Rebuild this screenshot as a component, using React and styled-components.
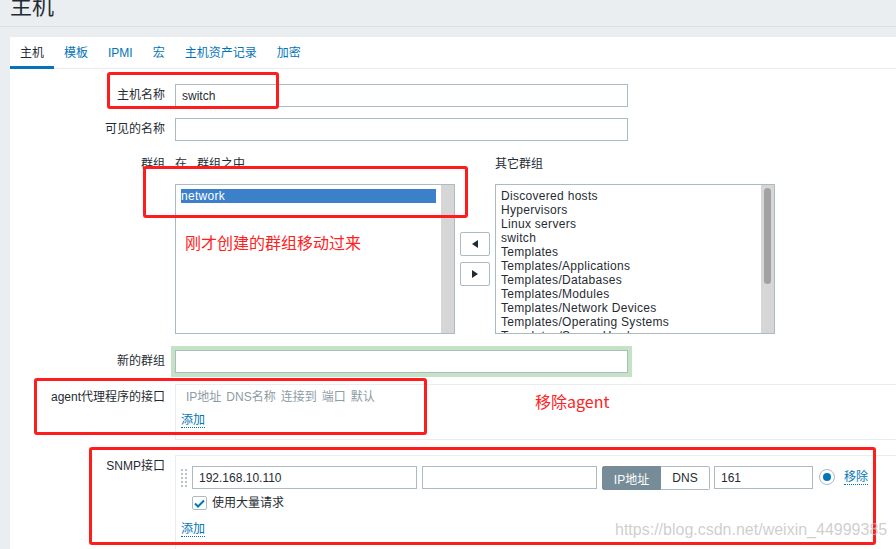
import React from 'react';
import styled, { createGlobalStyle } from 'styled-components';

const GlobalStyle = createGlobalStyle`
  html, body {
    margin: 0;
    padding: 0;
  }
  body {
    background: #ebeef0;
    font-family: 'Liberation Sans', 'Noto Sans CJK SC', sans-serif;
    font-size: 12px;
    color: #1f2c33;
    overflow: hidden;
  }
`;

const Page = styled.div`
  position: relative;
  width: 896px;
  height: 549px;
  overflow: hidden;
`;

const Header = styled.header`
  height: 26px;
  border-bottom: 1px solid #dcdfe2;
  padding-left: 10px;
  overflow: hidden;
`;

const Title = styled.h1`
  margin: -8px 0 0;
  font-size: 22px;
  line-height: 30px;
  font-weight: normal;
  color: #1f2c33;
`;

const Panel = styled.main`
  margin: 10px 0 0 10px;
  background: #fff;
  height: 512px;
`;

const Tabs = styled.nav`
  display: flex;
  height: 31px;
  border-bottom: 1px solid #ebeef0;
`;

const Tab = styled.a`
  position: relative;
  padding: 0 10px;
  line-height: 32px;
  color: ${(p) => (p.$active ? '#1f2c33' : '#0275b8')};
  &::after {
    content: '';
    position: absolute;
    left: 0;
    right: 0;
    bottom: -1px;
    height: 3px;
    background: ${(p) => (p.$active ? '#0275b8' : 'transparent')};
  }
`;

const Form = styled.form`
  padding-top: 15px;
`;

const FormRow = styled.div`
  display: grid;
  grid-template-columns: 155px 1fr;
  column-gap: 10px;
  margin-top: ${(p) => p.$mt || 0}px;
`;

const Label = styled.label`
  text-align: right;
  line-height: ${(p) => p.$lh || 23}px;
  padding-top: ${(p) => p.$pt || 0}px;
  white-space: nowrap;
`;

const TextInput = styled.input`
  box-sizing: border-box;
  width: ${(p) => p.$w || 453}px;
  height: 23px;
  border: 1px solid #acbbc2;
  border-radius: 0;
  padding: 0 6px;
  font-family: inherit;
  font-size: 12px;
  color: #1f2c33;
  background: #fff;
  outline: none;
  box-shadow: ${(p) => (p.$focus ? '0 0 0 4px #c5e2c5' : 'none')};
`;

const GroupPicker = styled.div`
  display: grid;
  grid-template-columns: 280px 30px 280px;
  grid-template-rows: 24px 150px;
  column-gap: 5px;
  row-gap: 8px;
  margin-bottom: 5px;
`;

const GroupHead = styled.div`
  line-height: 24px;
  grid-column: ${(p) => p.$col};
`;

const ListBox = styled.div`
  box-sizing: border-box;
  display: flex;
  height: 150px;
  border: 1px solid #acbbc2;
  overflow: hidden;
  grid-column: ${(p) => p.$col};
`;

const ListItems = styled.div`
  flex: 1;
  padding: 4px 5px 0;
  overflow: hidden;
  letter-spacing: 0.3px;
`;

const ListItem = styled.div`
  line-height: 14px;
  white-space: nowrap;
  background: ${(p) => (p.$selected ? '#3b80c8' : 'transparent')};
  color: ${(p) => (p.$selected ? '#fff' : '#1f2c33')};
`;

const ScrollTrack = styled.div`
  width: 13px;
  background: #d6d6d6;
  padding-top: 3px;
  box-sizing: border-box;
`;

const ScrollThumb = styled.div`
  width: 7px;
  height: 96px;
  margin: 0 auto;
  border-radius: 4px;
  background: #a2a2a2;
`;

const MoveButtons = styled.div`
  grid-column: 2;
  display: flex;
  flex-direction: column;
  justify-content: center;
  gap: 6px;
`;

const MoveButton = styled.button`
  width: 30px;
  height: 24px;
  padding: 0;
  border: 1px solid #acbbc2;
  border-radius: 2px;
  background: #fff;
  display: flex;
  align-items: center;
  justify-content: center;
  svg {
    fill: #1f2c33;
  }
`;

const InterfaceBox = styled.div`
  box-sizing: border-box;
  border: 1px solid #ebeef0;
  border-right: none;
  height: ${(p) => p.$h}px;
  padding: ${(p) => p.$pad};
`;

const IfaceHead = styled.div`
  display: flex;
  gap: 5px;
  padding-left: 5px;
  line-height: 14px;
  color: #8d9ca5;
`;

const LinkText = styled.a`
  display: inline-block;
  color: #0275b8;
  line-height: 14px;
  border-bottom: 1px dotted #0275b8;
  margin-top: ${(p) => p.$mt || 0}px;
  margin-left: ${(p) => p.$ml || 0}px;
`;

const IfaceRow = styled.div`
  display: flex;
  align-items: flex-start;
  gap: 5px;
`;

const DragHandle = styled.svg`
  width: 6px;
  height: 18px;
  margin-top: 3px;
  fill: #b8c4ca;
`;

const Segment = styled.div`
  display: flex;
  height: 24px;
`;

const SegmentBtn = styled.span`
  box-sizing: border-box;
  width: ${(p) => p.$w}px;
  display: flex;
  align-items: center;
  justify-content: center;
  border: 1px solid ${(p) => (p.$active ? '#768d99' : '#acbbc2')};
  border-left-width: ${(p) => (p.$active ? 1 : 0)}px;
  background: ${(p) => (p.$active ? '#768d99' : '#fff')};
  color: ${(p) => (p.$active ? '#fff' : '#1f2c33')};
  border-radius: ${(p) => (p.$active ? '2px 0 0 2px' : '0 2px 2px 0')};
`;

const PortInput = styled(TextInput)`
  margin-left: -1px;
`;

const Radio = styled.span`
  box-sizing: border-box;
  width: 16px;
  height: 16px;
  margin: 3px 0 0 1px;
  border: 1px solid #acbbc2;
  border-radius: 50%;
  display: flex;
  align-items: center;
  justify-content: center;
  &::after {
    content: '';
    width: 8px;
    height: 8px;
    border-radius: 50%;
    background: #0275b8;
  }
`;

const CheckRow = styled.div`
  display: flex;
  align-items: center;
  gap: 5px;
  margin: 6px 0 0 11px;
  line-height: 14px;
`;

const CheckBox = styled.span`
  box-sizing: border-box;
  width: 15px;
  height: 14px;
  border: 1px solid #acbbc2;
  border-radius: 2px;
  display: flex;
  align-items: center;
  justify-content: center;
`;

const Annotation = styled.div`
  position: absolute;
  left: ${(p) => p.$x}px;
  top: ${(p) => p.$y}px;
  width: ${(p) => p.$w}px;
  height: ${(p) => p.$h}px;
  box-sizing: border-box;
  border: 3px solid #ff1c1c;
  border-radius: 3px;
  pointer-events: none;
`;

const Note = styled.div`
  position: absolute;
  left: ${(p) => p.$x}px;
  top: ${(p) => p.$y}px;
  font-family: 'Noto Sans CJK SC', 'Liberation Sans', sans-serif;
  font-size: 16px;
  line-height: 20px;
  color: #ff2222;
  white-space: nowrap;
`;

const Watermark = styled.div`
  position: absolute;
  left: 615px;
  top: 520px;
  font-family: 'Liberation Sans', sans-serif;
  font-size: 16px;
  line-height: 20px;
  color: rgba(190, 190, 190, 0.75);
  white-space: nowrap;
  pointer-events: none;
`;

const otherGroups = [
  'Discovered hosts',
  'Hypervisors',
  'Linux servers',
  'switch',
  'Templates',
  'Templates/Applications',
  'Templates/Databases',
  'Templates/Modules',
  'Templates/Network Devices',
  'Templates/Operating Systems',
  'Templates/Server Hardware',
];

const tabs = ['主机', '模板', 'IPMI', '宏', '主机资产记录', '加密'];

const Arrow = ({ left }) => (
  <svg width='6' height='8' viewBox='0 0 6 8'>
    <path d={left ? 'M6 0 L0 4 L6 8 Z' : 'M0 0 L6 4 L0 8 Z'} />
  </svg>
);

const App = () => {
  return (
    <Page>
      <GlobalStyle />
      <Header>
        <Title>主机</Title>
      </Header>
      <Panel>
        <Tabs>
          {tabs.map((t, i) => (
            <Tab key={t} $active={i === 0}>
              {t}
            </Tab>
          ))}
        </Tabs>

        <Form>
          {/* Host name */}
          <FormRow>
            <Label>主机名称</Label>
            <TextInput defaultValue='switch' />
          </FormRow>
          <FormRow $mt={11}>
            <Label>可见的名称</Label>
            <TextInput />
          </FormRow>

          {/* Groups */}
          <FormRow $mt={11}>
            <Label $lh={24}>群组</Label>
            <GroupPicker>
              <GroupHead $col={1}>在...群组之中</GroupHead>
              <GroupHead $col={3}>其它群组</GroupHead>
              <ListBox $col={1}>
                <ListItems>
                  <ListItem $selected>network</ListItem>
                </ListItems>
                <ScrollTrack />
              </ListBox>
              <MoveButtons>
                <MoveButton type='button'>
                  <Arrow left />
                </MoveButton>
                <MoveButton type='button'>
                  <Arrow />
                </MoveButton>
              </MoveButtons>
              <ListBox $col={3}>
                <ListItems>
                  {otherGroups.map((g) => (
                    <ListItem key={g}>{g}</ListItem>
                  ))}
                </ListItems>
                <ScrollTrack>
                  <ScrollThumb />
                </ScrollTrack>
              </ListBox>
            </GroupPicker>
          </FormRow>

          <FormRow $mt={11}>
            <Label>新的群组</Label>
            <TextInput $focus />
          </FormRow>

          {/* Agent interfaces */}
          <FormRow $mt={11}>
            <Label $lh={14} $pt={6}>
              agent代理程序的接口
            </Label>
            <InterfaceBox $h={56} $pad='5px 5px'>
              <IfaceHead>
                <span>IP地址</span>
                <span>DNS名称</span>
                <span>连接到</span>
                <span>端口</span>
                <span>默认</span>
              </IfaceHead>
              <LinkText $mt={9}>添加</LinkText>
            </InterfaceBox>
          </FormRow>

          {/* SNMP interfaces */}
          <FormRow $mt={15}>
            <Label $lh={14} $pt={4}>
              SNMP接口
            </Label>
            <InterfaceBox $h={120} $pad='10px 5px'>
              <IfaceRow>
                <DragHandle viewBox='0 0 6 18'>
                  {[0, 4, 8, 12, 16].map((y) => (
                    <React.Fragment key={y}>
                      <rect x='0' y={y} width='2' height='2' />
                      <rect x='4' y={y} width='2' height='2' />
                    </React.Fragment>
                  ))}
                </DragHandle>
                <TextInput $w={225} defaultValue='192.168.10.110' />
                <TextInput $w={175} />
                <Segment>
                  <SegmentBtn $active $w={59}>
                    IP地址
                  </SegmentBtn>
                  <SegmentBtn $w={49}>DNS</SegmentBtn>
                </Segment>
                <PortInput $w={99} defaultValue='161' />
                <Radio />
                <LinkText $mt={4} $ml={4}>
                  移除
                </LinkText>
              </IfaceRow>
              <CheckRow>
                <CheckBox>
                  <svg width='11' height='9' viewBox='0 0 11 9'>
                    <path d='M1 4.5 L4 7.5 L10 1.5' fill='none' stroke='#0275b8' strokeWidth='2' />
                  </svg>
                </CheckBox>
                使用大量请求
              </CheckRow>
              <LinkText $mt={12}>添加</LinkText>
            </InterfaceBox>
          </FormRow>
        </Form>
      </Panel>

      {/* Red annotations drawn over the screenshot */}
      <Annotation $x={107} $y={72} $w={172} $h={37} />
      <Annotation $x={143} $y={166} $w={325} $h={52} />
      <Annotation $x={34} $y={378} $w={393} $h={57} />
      <Annotation $x={89} $y={447} $w={787} $h={98} />
      <Note $x={185} $y={232}>刚才创建的群组移动过来</Note>
      <Note $x={535} $y={391}>移除agent</Note>
      <Watermark>https://blog.csdn.net/weixin_44999385</Watermark>
    </Page>
  );
};

export default App;
